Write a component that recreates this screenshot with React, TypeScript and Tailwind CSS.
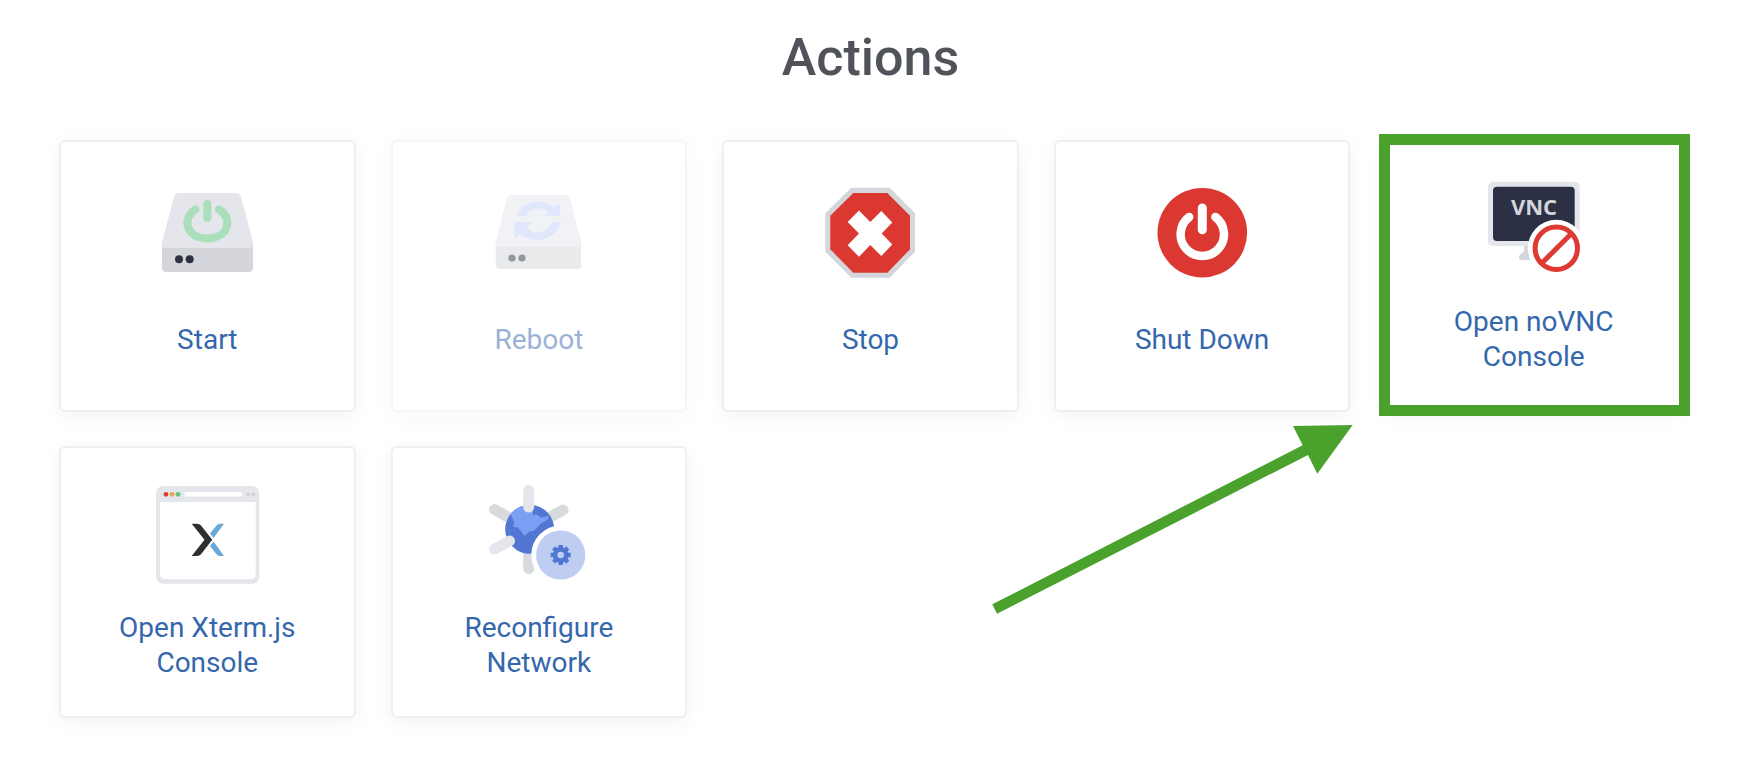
import React from 'react';

const StartIcon = () => (
    <svg viewBox="0 0 112 112" className="w-28 h-28" aria-hidden="true">
        <path d="M11 68H102V92Q102 96 98 96H15Q11 96 11 92Z" fill="#d5d6db" />
        <path d="M28 17H85Q89 17 90 21L102 66Q103 72 98 72H15Q10 72 11 66L23 21Q24 17 28 17Z" fill="#e5e6ec" />
        <path d="M44.5 33.5C31 41 34 62.5 56.3 62.5C78.5 62.5 82 41 68 33.5" fill="none" stroke="#abdfbc" strokeWidth="8" strokeLinecap="round" />
        <path d="M56.3 28V42" stroke="#abdfbc" strokeWidth="8" strokeLinecap="round" />
        <circle cx="28" cy="83.3" r="4" fill="#2c3144" />
        <circle cx="38.7" cy="83.3" r="4" fill="#2c3144" />
    </svg>
);

const RebootIcon = () => (
    <svg viewBox="0 0 112 112" className="w-28 h-28" aria-hidden="true">
        <path d="M12.7 67H98V89Q98 93 94 93H17Q12.7 93 12.7 89Z" fill="#d5d6db" />
        <path d="M28 19H82Q86 19 87 23L98 65Q99 71 94 71H17Q12 71 13 65L23.7 23Q24.7 19 28 19Z" fill="#e5e6ec" />
        <path d="M33.7 39.7C39 25 59 21.500 71 31L77 28V39.7H61L65 36C58 30 47 31 43.700 39.7Z" fill="#c2cff8" />
        <path d="M78.3 46C73 64 51 69 37 58.500L31 62.3L31.7 46H49.3L44 51.500C51 59.500 65 57 69 46Z" fill="#c2cff8" />
        <circle cx="29" cy="82" r="3.6" fill="#2c3144" />
        <circle cx="39" cy="82" r="3.6" fill="#2c3144" />
    </svg>
);

const StopIcon = () => (
    <svg viewBox="0 0 112 112" className="w-28 h-28" aria-hidden="true">
        <path d="M37.3 11.7H75.7L101 37.3V75.7L75.7 101.7H37.3L11.3 75.7V37.3Z" fill="#d5d6db" />
        <path d="M39.3 17H73.3L96 39.7V73.3L73.3 96.7H39.3L16.3 73.3V39.7Z" fill="#db3832" />
        <path d="M45 34.5L56.3 46L67.3 35L78.3 46.5L67.7 57.5L78.3 68.5L67.3 80L56.3 69L45 80.8L33.7 69.3L45 57.5L33.7 46Z" fill="#fff" />
    </svg>
);

const ShutDownIcon = () => (
    <svg viewBox="0 0 112 112" className="w-28 h-28" aria-hidden="true">
        <circle cx="56.3" cy="56.7" r="44.8" fill="#db3832" />
        <path d="M43.2 41A21.7 21.7 0 1 0 69.4 41" fill="none" stroke="#fff" strokeWidth="8.5" strokeLinecap="round" />
        <path d="M56.3 32V53.7" stroke="#fff" strokeWidth="9" strokeLinecap="round" />
    </svg>
);

const NoVncIcon = () => (
    <svg viewBox="0 0 112 112" className="w-28 h-28" aria-hidden="true">
        <path d="M46 69H56V84H44Q41 84 41 81Q41 78 46 76Z" fill="#d5d6db" />
        <rect x="10" y="5.7" width="91.7" height="64.3" rx="5" fill="#e5e6ec" />
        <rect x="15" y="10.7" width="81.7" height="54.3" rx="4" fill="#2b3044" />
        <text x="56" y="38.7" textAnchor="middle" fontSize="22" fontWeight="700" fill="#d3d5da" className="font-['Open_Sans',sans-serif]">VNC</text>
        <circle cx="78.3" cy="72.3" r="28.5" fill="#fff" />
        <circle cx="78.3" cy="72.3" r="21.2" fill="none" stroke="#de3a33" strokeWidth="5" />
        <path d="M64 87L93 58" stroke="#de3a33" strokeWidth="5" />
    </svg>
);

const XtermIcon = () => (
    <svg viewBox="0 0 112 112" className="w-28 h-28" aria-hidden="true">
        <rect x="5" y="4" width="103.3" height="97.7" rx="7" fill="#e5e6ec" />
        <path d="M9 20H104.7V92Q104.7 97.3 99.5 97.3H14.5Q9 97.3 9 92Z" fill="#fff" />
        <circle cx="15" cy="12.3" r="2.4" fill="#d9403a" />
        <circle cx="21" cy="12.3" r="2.4" fill="#e3ac4b" />
        <circle cx="27" cy="12.3" r="2.4" fill="#5fc47f" />
        <rect x="33.3" y="10" width="58" height="4.6" rx="2" fill="#fff" />
        <circle cx="97" cy="12.3" r="1.9" fill="#d0d1d6" />
        <circle cx="102.3" cy="12.3" r="1.9" fill="#d0d1d6" />
        <path d="M59 51.5L65.5 43.5Q67 41.7 69 41.7H73L62.5 56ZM59 64L65.5 72.2Q67 74 69 74H73L62.5 59.5Z" fill="#69a7d6" />
        <path d="M40.7 41.7H46Q48.5 41.7 50 43.5L61.3 57.8L50 72.2Q48.5 74 46 74H40.7L53.5 57.8Z" fill="#2f2f2f" />
    </svg>
);

const NetworkIcon = () => (
    <svg viewBox="0 0 112 112" className="w-28 h-28" aria-hidden="true">
        <path d="M11.5 27.5L30 38M80 28L62 38M45.7 68V86.5" stroke="#d9dade" strokeWidth="11" strokeLinecap="round" />
        <clipPath id="globe">
            <circle cx="46.7" cy="47.3" r="24.5" />
        </clipPath>
        <g clipPath="url(#globe)">
            <rect x="20" y="20" width="54" height="54" fill="#5277d2" />
            <path d="M24 30L27 31L31 39.7L30.3 44.7L35 45.7L41.7 54L46 49.7L51 48.7L58.3 41.3L65 37.3L65.7 33.7L58.3 35.7L52.7 32L50 34L50 20H24Z" fill="#7b9ff2" />
        </g>
        <path d="M45.7 8.5V25M11.5 67L26.5 59" stroke="#e5e6ec" strokeWidth="11" strokeLinecap="round" />
        <circle cx="77.7" cy="73" r="29.5" fill="#fff" />
        <circle cx="77.7" cy="73" r="24.6" fill="#bfcdf2" />
        <circle cx="77.7" cy="73" r="5.6" fill="none" stroke="#5077d2" strokeWidth="4.6" />
        <path
            d="M77.7 63V66M77.7 80V83M67.7 73H70.7M84.7 73H87.7M70.6 65.9L72.7 68M82.7 78L84.8 80.1M84.8 65.9L82.7 68M72.7 78L70.6 80.1"
            stroke="#5077d2"
            strokeWidth="4.4"
        />
    </svg>
);

const actions = [
    { label: 'Start', icon: StartIcon },
    { label: 'Reboot', icon: RebootIcon, disabled: true },
    { label: 'Stop', icon: StopIcon },
    { label: 'Shut Down', icon: ShutDownIcon },
    { label: 'Open noVNC Console', icon: NoVncIcon, highlighted: true },
    { label: 'Open Xterm.js Console', icon: XtermIcon },
    { label: 'Reconfigure Network', icon: NetworkIcon },
];

export default function App() {
    return (
        <main className="bg-white pr-[60px] pl-[59px] pt-7 pb-[54px] font-[Roboto,sans-serif]">
            <h1 className="mb-[52px] text-center text-[52px] leading-[60px] font-medium text-[#50545a]">Actions</h1>

            <ul className="grid grid-cols-5 gap-x-[35px] gap-y-[34px]">
                {actions.map(({ label, icon: Icon, disabled, highlighted }) => (
                    <li key={label} className="relative">
                        <button
                            type="button"
                            disabled={disabled}
                            className="flex w-full flex-col items-center gap-4 rounded-md border-2 border-[#eeeff3] bg-white px-10 pt-[34px] pb-9 shadow-[0_4px_20px_rgba(0,0,0,0.05)] disabled:opacity-50"
                        >
                            <Icon />
                            <span className="flex min-h-[70px] items-center text-center text-[28px] leading-[35px] text-[#3567ad]">
                                {label}
                            </span>
                        </button>

                        {/* Callout frame and arrow */}
                        {highlighted && (
                            <>
                                <div className="pointer-events-none absolute -top-1.5 -right-2 -bottom-1 -left-1.5 border-[11px] border-[#4aa22d]"></div>
                                <svg
                                    viewBox="0 0 362 190"
                                    className="pointer-events-none absolute top-full right-full mt-3 mr-8 h-[190px] w-[362px]"
                                    aria-hidden="true"
                                >
                                    <path d="M1.3 180.3L311.7 21.3L302 2L361.7 1L326.3 49.7L317 31L6 189.7Z" fill="#4aa22d" />
                                </svg>
                            </>
                        )}
                    </li>
                ))}
            </ul>
        </main>
    );
}
